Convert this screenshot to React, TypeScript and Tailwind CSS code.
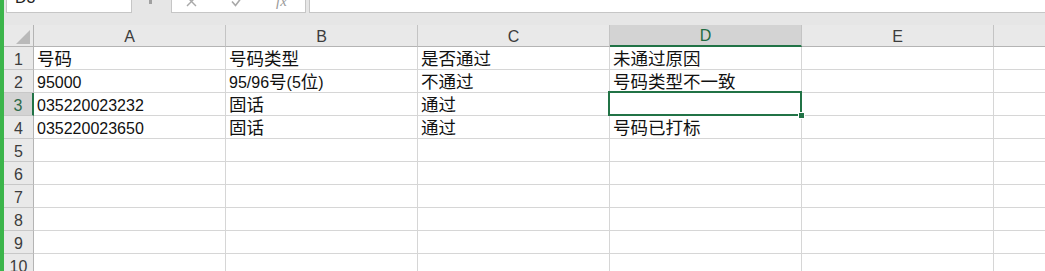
import React from 'react';

const cols = ['A', 'B', 'C', 'D', 'E'];

const data: string[][] = [
  ['号码', '号码类型', '是否通过', '未通过原因'],
  ['95000', '95/96号(5位)', '不通过', '号码类型不一致'],
  ['035220023232', '固话', '通过', ''],
  ['035220023650', '固话', '通过', '号码已打标'],
];

// CJK glyphs are a touch bigger than the digits in the original font
function CellText({ text }: { text: string }) {
  const parts = text.split(/([\u4e00-\u9fff]+)/);
  return (
    <span className="whitespace-nowrap">
      {parts.map((p, i) =>
        i % 2 === 1 ? (
          <span key={i} className="text-[17.5px]">
            {p}
          </span>
        ) : (
          <span key={i}>{p}</span>
        )
      )}
    </span>
  );
}

function FormulaBar() {
  return (
    <div className="flex h-[13px] shrink-0 items-end overflow-hidden bg-[#e6e6e6]">
      <div className="ml-[2px] flex h-[24px] w-[126px] shrink-0 items-end border border-[#c6c6c6] bg-white pb-[6px] pl-[8px]">
        <span className="text-[16px] leading-[16px] text-[#222]">D3</span>
      </div>
      <div className="ml-[17px] mb-[9px] h-[4px] w-[3px] shrink-0 bg-[#a0a0a0]" />
      <div className="ml-[19px] flex h-[24px] w-[135px] shrink-0 items-center border border-[#c6c6c6] bg-white">
        <svg className="ml-[14px]" width="11" height="11" viewBox="0 0 11 11">
          <path d="M1 1 L10 10 M10 1 L1 10" stroke="#a8a8a8" strokeWidth="1.4" />
        </svg>
        <svg className="ml-[34px]" width="12" height="11" viewBox="0 0 12 11">
          <path d="M1 5.5 L4.5 9.5 L11 1" stroke="#a8a8a8" strokeWidth="1.6" fill="none" />
        </svg>
        <span className="ml-[33px] text-[15px] italic leading-none text-[#9a9a9a] [font-family:'Liberation_Serif',serif]">
          fx
        </span>
      </div>
      <div className="ml-[3px] h-[24px] flex-1 border border-r-0 border-[#c6c6c6] bg-white" />
    </div>
  );
}

function HeaderRow() {
  return (
    <div className="flex h-[22px] shrink-0 bg-[#e9e9e9]">
      <div className="relative w-[30px] shrink-0 border-b border-r border-[#b4b4b4]">
        <svg className="absolute left-0 top-0" width="30" height="22" viewBox="0 0 30 22">
          <polygon points="12,19 26,19 26,5" fill="#b9b9b9" />
        </svg>
      </div>
      {cols.map((c) => (
        <div
          key={c}
          className={`flex w-[192px] shrink-0 items-end justify-center border-r border-[#c4c4c4] leading-[18px] ${
            c === 'D'
              ? 'border-b-2 border-b-[#217346] bg-[#d3d3d3] text-[#1e6b41]'
              : 'border-b border-b-[#b4b4b4] text-[#3c3c3c]'
          }`}
        >
          {c}
        </div>
      ))}
      <div className="flex-1 border-b border-b-[#b4b4b4]" />
    </div>
  );
}

function Row({ n }: { n: number }) {
  const cells = data[n - 1] || [];
  const selectedRow = n === 3;
  return (
    <div className="flex h-[23px] shrink-0">
      <div
        className={`flex w-[30px] shrink-0 items-end justify-center border-b border-b-[#c8c8c8] leading-[18px] ${
          selectedRow
            ? 'border-r-2 border-r-[#217346] bg-[#d3d3d3] text-[#2e6b4a]'
            : 'border-r border-r-[#b4b4b4] bg-[#e9e9e9] text-[#3c3c3c]'
        }`}
      >
        {n}
      </div>
      {cols.map((c, i) => (
        <div
          key={c}
          className="relative flex w-[192px] shrink-0 items-end border-b border-r border-[#d6d6d6] pl-[3px] leading-[18px] text-[#111]"
        >
          {cells[i] ? <CellText text={cells[i]} /> : null}
          {selectedRow && c === 'D' && (
            <div className="absolute -left-[2px] -top-[2px] -right-[1px] -bottom-[1px] z-10 border-2 border-[#217346]">
              <div className="absolute -bottom-[5px] -right-[5px] h-[7px] w-[7px] border border-white bg-[#217346]" />
            </div>
          )}
        </div>
      ))}
      <div className="flex-1 border-b border-[#d6d6d6]" />
    </div>
  );
}

export default function App() {
  return (
    <div className="flex h-[271px] w-[1045px] overflow-hidden bg-white text-[16px] [font-family:'Liberation_Sans','Noto_Sans_CJK_SC',sans-serif]">
      <div className="w-[4px] shrink-0 bg-[#3cb54b]" />
      <div className="flex min-w-0 flex-1 flex-col">
        <FormulaBar />
        <div className="h-[12px] shrink-0 bg-[#e6e6e6]" />
        <HeaderRow />
        {[1, 2, 3, 4, 5, 6, 7, 8, 9, 10].map((n) => (
          <Row key={n} n={n} />
        ))}
      </div>
    </div>
  );
}
